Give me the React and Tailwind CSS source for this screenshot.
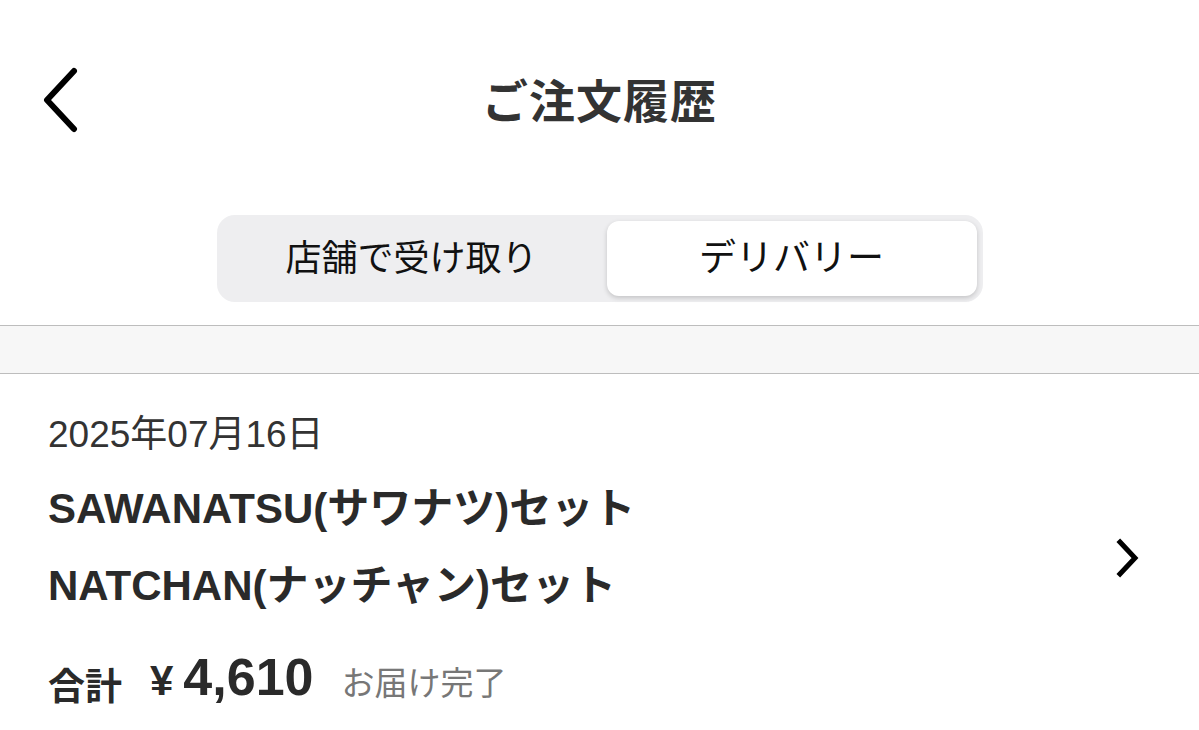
import React from 'react';

const font = { fontFamily: '"Liberation Sans", "Noto Sans CJK JP", sans-serif' };

const BackIcon = () => (
  <svg width="40" height="66" viewBox="0 0 40 66" fill="none">
    <path d="M34 4 L7 33 L34 62" stroke="#000" strokeWidth="6" strokeLinecap="round" strokeLinejoin="round" />
  </svg>
);

const NextIcon = () => (
  <svg width="26" height="40" viewBox="0 0 26 40" fill="none">
    <path d="M5 4 L20 20 L5 36" stroke="#000" strokeWidth="5" strokeLinecap="square" strokeLinejoin="miter" />
  </svg>
);

const OrderItem = ({ date, items, total, status }) => (
  <div className="flex items-center pl-[48px] pr-[58px] pt-[41px]">
    <div className="flex-1">
      <div className="h-[40px] leading-[40px] text-[37px] text-[#333]">{date}</div>
      <div className="mt-[15px]">
        {items.map((it) => (
          <div key={it} className="h-[77px] leading-[77px] text-[42px] font-bold text-[#2a2a2a]">
            {it}
          </div>
        ))}
      </div>
      <div className="mt-[14px] h-[60px] flex items-baseline text-[#2a2a2a]">
        <span className="text-[37px] font-bold translate-y-[5px]">合計</span>
        <span className="ml-[28px] text-[42px] font-bold">¥</span>
        <span className="ml-[10px] text-[52px] font-bold">{total}</span>
        <span className="ml-[28px] text-[33px] text-[#777]">{status}</span>
      </div>
    </div>
    <div className="mt-[2px]">
      <NextIcon />
    </div>
  </div>
);

export default function App() {
  return (
    <div className="w-[1199px] h-[730px] bg-white overflow-hidden" style={font}>
      <div className="h-[204px] grid grid-cols-[1fr_auto_1fr] items-center">
        <div className="pl-[40px] pb-[4px]">
          <BackIcon />
        </div>
        <h1 className="text-[46px] font-bold text-[#333] tracking-[1px]">ご注文履歴</h1>
        <div></div>
      </div>

      <div className="pt-[11px] flex justify-center">
        <div className="w-[766px] h-[87px] bg-[#eeeef0] rounded-[18px] p-[6px] flex">
          <button className="flex-1 text-[36px] text-[#111] rounded-[12px] pr-[6px]">店舗で受け取り</button>
          <button className="w-[370px] text-[37px] text-[#111] bg-white rounded-[12px] shadow-[0_2px_5px_rgba(0,0,0,0.18)]">
            デリバリー
          </button>
        </div>
      </div>

      <div className="mt-[23px] h-[49px] bg-[#f7f7f7] border-y border-[#bdbdbd]"></div>

      <OrderItem
        date="2025年07月16日"
        items={['SAWANATSU(サワナツ)セット', 'NATCHAN(ナッチャン)セット']}
        total="4,610"
        status="お届け完了"
      />
    </div>
  );
}
